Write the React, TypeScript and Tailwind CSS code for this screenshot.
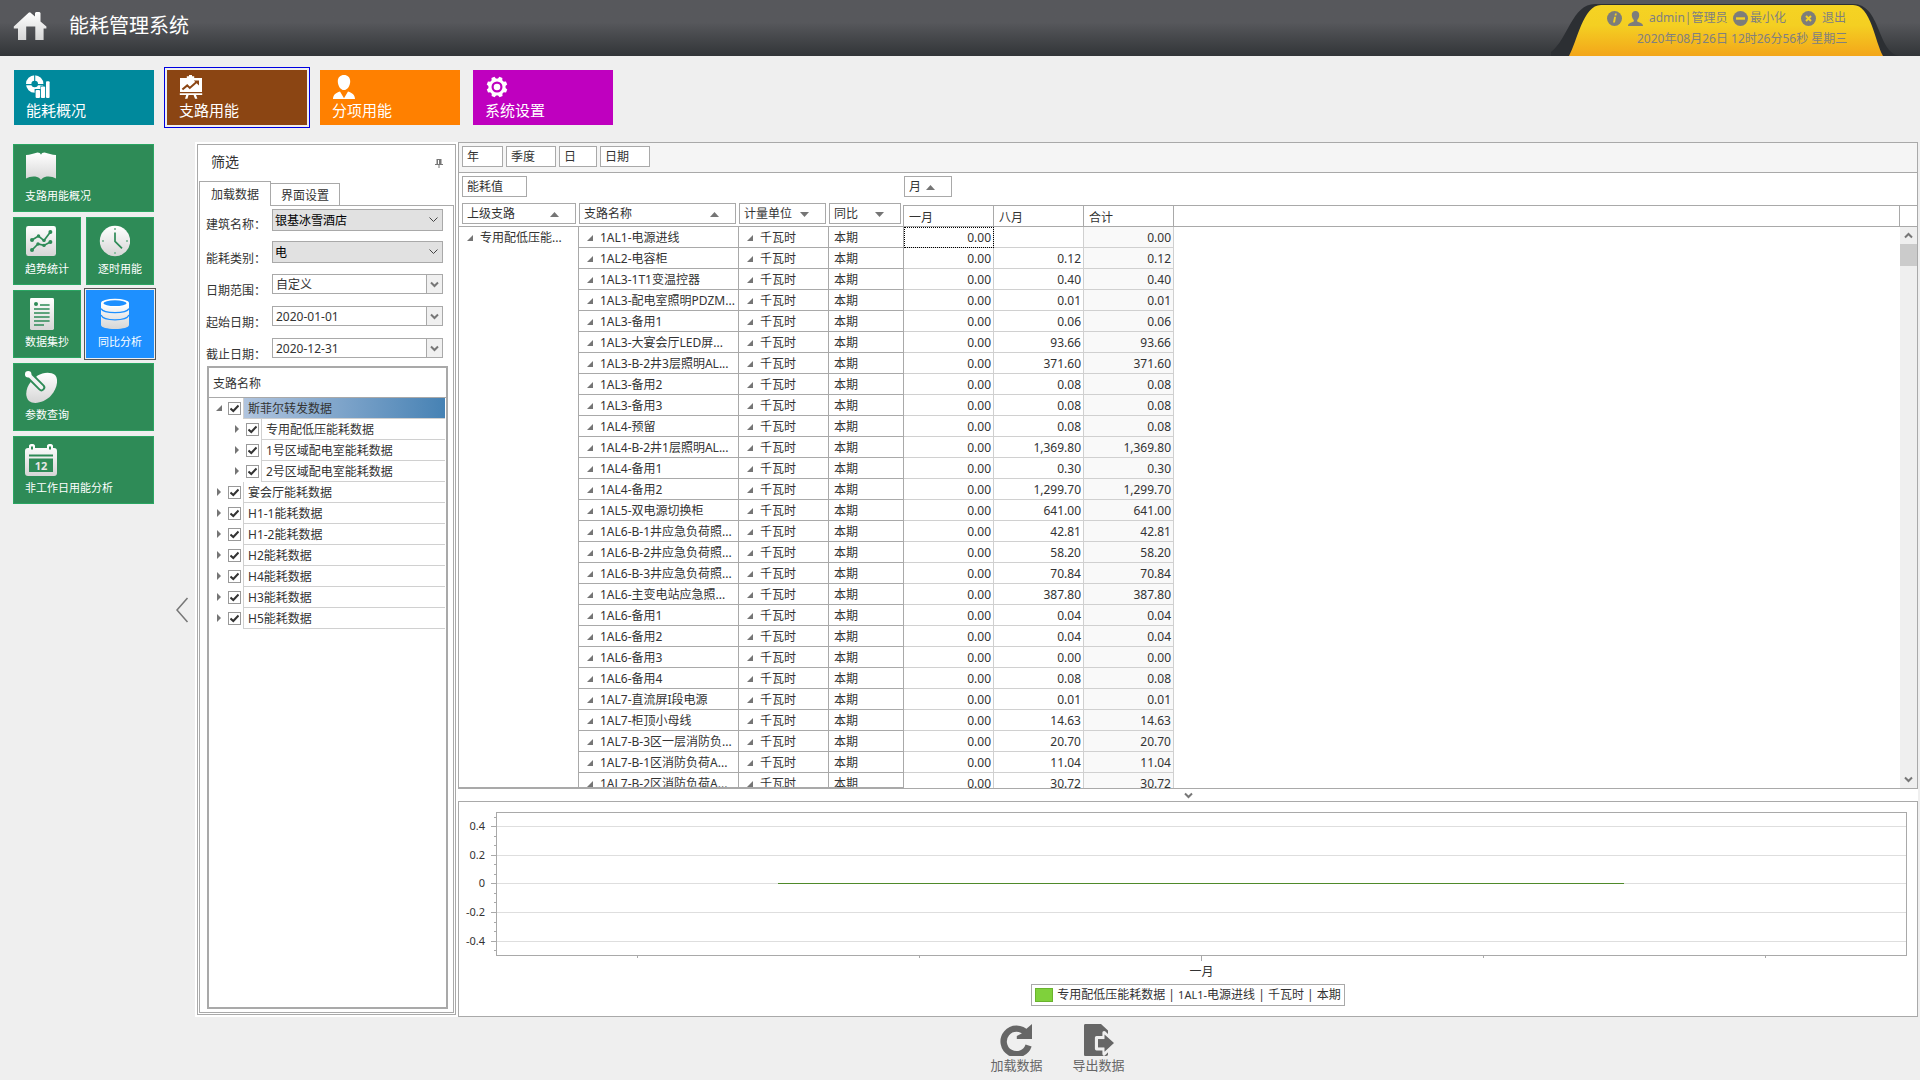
import React, { useState } from "react";

/* ---------- data ---------- */

type Row = { name: string; aug: string; total: string };

const rows: Row[] = [
  { name: "1AL1-电源进线", aug: "", total: "0.00" },
  { name: "1AL2-电容柜", aug: "0.12", total: "0.12" },
  { name: "1AL3-1T1变温控器", aug: "0.40", total: "0.40" },
  { name: "1AL3-配电室照明PDZM...", aug: "0.01", total: "0.01" },
  { name: "1AL3-备用1", aug: "0.06", total: "0.06" },
  { name: "1AL3-大宴会厅LED屏...", aug: "93.66", total: "93.66" },
  { name: "1AL3-B-2井3层照明AL...", aug: "371.60", total: "371.60" },
  { name: "1AL3-备用2", aug: "0.08", total: "0.08" },
  { name: "1AL3-备用3", aug: "0.08", total: "0.08" },
  { name: "1AL4-预留", aug: "0.08", total: "0.08" },
  { name: "1AL4-B-2井1层照明AL...", aug: "1,369.80", total: "1,369.80" },
  { name: "1AL4-备用1", aug: "0.30", total: "0.30" },
  { name: "1AL4-备用2", aug: "1,299.70", total: "1,299.70" },
  { name: "1AL5-双电源切换柜", aug: "641.00", total: "641.00" },
  { name: "1AL6-B-1井应急负荷照...", aug: "42.81", total: "42.81" },
  { name: "1AL6-B-2井应急负荷照...", aug: "58.20", total: "58.20" },
  { name: "1AL6-B-3井应急负荷照...", aug: "70.84", total: "70.84" },
  { name: "1AL6-主变电站应急照...", aug: "387.80", total: "387.80" },
  { name: "1AL6-备用1", aug: "0.04", total: "0.04" },
  { name: "1AL6-备用2", aug: "0.04", total: "0.04" },
  { name: "1AL6-备用3", aug: "0.00", total: "0.00" },
  { name: "1AL6-备用4", aug: "0.08", total: "0.08" },
  { name: "1AL7-直流屏I段电源", aug: "0.01", total: "0.01" },
  { name: "1AL7-柜顶小母线", aug: "14.63", total: "14.63" },
  { name: "1AL7-B-3区一层消防负...", aug: "20.70", total: "20.70" },
  { name: "1AL7-B-1区消防负荷A...", aug: "11.04", total: "11.04" },
  { name: "1AL7-B-2区消防负荷A...", aug: "30.72", total: "30.72" },
];

const tree = [
  { label: "斯菲尔转发数据", level: 0, open: true, selected: true },
  { label: "专用配低压能耗数据", level: 1 },
  { label: "1号区域配电室能耗数据", level: 1 },
  { label: "2号区域配电室能耗数据", level: 1 },
  { label: "宴会厅能耗数据", level: 0 },
  { label: "H1-1能耗数据", level: 0 },
  { label: "H1-2能耗数据", level: 0 },
  { label: "H2能耗数据", level: 0 },
  { label: "H4能耗数据", level: 0 },
  { label: "H3能耗数据", level: 0 },
  { label: "H5能耗数据", level: 0 },
];

/* ---------- icons ---------- */

const fade = "url(#fade)";

function Gradients() {
  return (
    <svg width="0" height="0" className="absolute" aria-hidden="true">
      <defs>
        <linearGradient id="fade" x1="0" y1="0" x2="0" y2="1">
          <stop offset="0" stopColor="#ffffff" />
          <stop offset="1" stopColor="#d6d6d6" />
        </linearGradient>
        <linearGradient id="gold" x1="0" y1="0" x2="0" y2="1">
          <stop offset="0" stopColor="#f5d323" />
          <stop offset="0.4" stopColor="#f4cf22" />
          <stop offset="1" stopColor="#f3a61a" />
        </linearGradient>
      </defs>
    </svg>
  );
}

function HomeIcon() {
  return (
    <svg width="34" height="30" viewBox="0 0 34 30">
      <path
        fill={fade}
        d="M17 1.2 L22 5.4 V2 L23 1 H26.5 L27.5 2 V10.5 L33.4 15.5 V17.5 H30.6 V29 H22.3 V15.5 H13.2 V29 H5 V17.5 H.8 V15.5 L15.6 1.7 Z"
      />
    </svg>
  );
}

function PieBarsIcon() {
  return (
    <svg width="24" height="24" viewBox="0 0 24 24">
      <circle cx="8.7" cy="9" r="6" fill="none" stroke="#fff" strokeWidth="5.4" />
      <path d="M8.7 0V6M0 9.6H6M11 9.6H18" stroke="#00899c" strokeWidth="1.1" />
      <path d="M8.6 14H14.4V10.4H19V5.5H25V24H8.6Z" fill="#00899c" />
      <rect x="9.6" y="15" width="4.4" height="8" rx="1" fill="#fff" />
      <rect x="14.9" y="11.4" width="4.2" height="11.6" rx="1" fill="#fff" />
      <rect x="20" y="6.2" width="3.6" height="16.8" rx="1" fill="#fff" />
    </svg>
  );
}

function BoardIcon() {
  return (
    <svg width="24" height="24" viewBox="0 0 24 24">
      <path d="M10 0H13V1.3H15.2V3H7.8V1.3H10Z" fill="#fff" />
      <path d="M1 3H23V17H1ZM0.8 18.2H23.2V20H0.8ZM7.2 20H9.6L8.4 23.8H6ZM14.6 20H17L18.4 23.8H16Z" fill="#fff" />
      <path d="M3.4 14.6L8.2 10.4L10.8 13L17.8 6.8" fill="none" stroke="#8b4513" strokeWidth="2" />
      <path d="M14.8 5.4H20V10.6Z" fill="#8b4513" />
    </svg>
  );
}

function PersonIcon() {
  return (
    <svg width="24" height="24" viewBox="0 0 24 24">
      <path
        fill="#fff"
        d="M12 0C15.6 0 18.2 2.4 18.2 6.4C18.2 10.6 15.4 15 12 15S5.8 10.6 5.8 6.4C5.8 2.4 8.4 0 12 0ZM8 16.4L12 23.2L16 16.4C20.4 17.8 23 20 23 24H1C1 20 3.6 17.8 8 16.4Z"
      />
    </svg>
  );
}

function GearIcon() {
  return (
    <svg width="24" height="24" viewBox="0 0 24 24">
      <g fill="#fff">
        {[0, 45, 90, 135].map((a) => (
          <path key={a} d="M9.6 4L10.4 1.6H13.6L14.4 4V20L13.6 22.4H10.4L9.6 20Z" transform={`rotate(${a + 22} 12 12)`} />
        ))}
        <circle cx="12" cy="12" r="8.6" />
      </g>
      <circle cx="12" cy="12" r="4.4" fill="none" stroke="#bf00bf" strokeWidth="2.2" />
    </svg>
  );
}

function MapIcon() {
  return (
    <svg width="32" height="32" viewBox="0 0 32 32">
      <path
        fill={fade}
        d="M1 3C5 3 9 1.6 12.5 .6C14.4 .6 15.4 1.4 16 2.8C16.6 1.4 17.6 .6 19.5 .6C23 1.6 27 3 31 3V26.6C28 25 24 23.800 20 25C18 25.600 16.800 26.800 16 28C15.200 26.800 14 25.600 12 25C8 23.800 4 25 1 26.600Z"
      />
    </svg>
  );
}

function TrendIcon() {
  return (
    <svg width="32" height="32" viewBox="0 0 32 32">
      <rect x="1" y="1" width="30" height="30" rx="2.4" fill={fade} />
      <g fill="none" stroke="#2e8b57" strokeWidth="1.7">
        <path d="M7 15L13.5 11L19 15.6L25.4 7M7 25L13 19L19 20.4L25.4 17" />
      </g>
      <g fill="#2e8b57">
        <circle cx="7" cy="15" r="2" />
        <circle cx="13.5" cy="11" r="1.7" />
        <circle cx="19" cy="15.4" r="1.7" />
        <circle cx="25.4" cy="7" r="2" />
        <circle cx="7" cy="25" r="2" />
        <circle cx="13" cy="19" r="1.7" />
        <circle cx="19" cy="20.4" r="1.7" />
        <circle cx="25.4" cy="17" r="2" />
      </g>
    </svg>
  );
}

function ClockIcon() {
  return (
    <svg width="32" height="32" viewBox="0 0 32 32">
      <circle cx="17" cy="16" r="15.2" fill={fade} />
      <path d="M17 7.4V16.4L24 23.4" fill="none" stroke="#2e8b57" strokeWidth="1.7" />
      <path d="M16 3H18V5H16ZM16 27H18V29H16ZM4 15H6V17H4ZM28 15H30V17H28Z" fill="#8fc0a4" />
    </svg>
  );
}

function SheetIcon() {
  return (
    <svg width="32" height="32" viewBox="0 0 32 32">
      <rect x="5" y="0" width="24" height="32" rx="1.4" fill={fade} />
      <circle cx="11" cy="6" r="2" fill="#2e8b57" />
      <path d="M15 7H24.6M9 11H24.6M9 15H24.6M9 19H24.6M9 23H24.6M9 27H19" stroke="#2e8b57" strokeWidth="1.7" />
    </svg>
  );
}

function DatabaseIcon() {
  return (
    <svg width="32" height="32" viewBox="0 0 32 32">
      <path d="M3 5V27C3 29.4 9 31 17 31S31 29.4 31 27V5Z" fill={fade} />
      <ellipse cx="17" cy="5" rx="14" ry="4.2" fill="#fff" />
      <ellipse cx="17" cy="5.2" rx="11.6" ry="2.9" fill="#1e90ff" />
      <g fill="none" stroke="#1e90ff" strokeWidth="1.3">
        <path d="M3 10.6C4.5 13.4 10 14.6 17 14.6S29.5 13.4 31 10.6M3 17C4.5 20.4 10 21.8 17 21.8S29.5 20.4 31 17" />
      </g>
    </svg>
  );
}

function DishIcon() {
  return (
    <svg width="32" height="32" viewBox="0 0 32 32">
      <path fill={fade} d="M12.6 4.6C18 1 26 .6 30 4C34 8.6 32 17.6 26 24.6C20 31.4 9 34 4 30C-.4 26 .6 17 6 10.6Z" />
      <path d="M3 3L16.4 16.4" stroke="#2e8b57" strokeWidth="7.6" strokeLinecap="round" />
      <path d="M4 4L16.4 16.4" stroke="#f2f2f2" strokeWidth="3.8" strokeLinecap="round" />
      <circle cx="3.2" cy="3.2" r="3.2" fill="#fff" />
    </svg>
  );
}

function CalendarIcon() {
  return (
    <svg width="32" height="32" viewBox="0 0 32 32">
      <path
        fill={fade}
        d="M3 4H4V2C4 -.6 10 -.6 10 2V4H22V2C22 -.6 28 -.6 28 2V4H29C31 4 32 5 32 7V29C32 31 31 32 29 32H3C1 32 0 31 0 29V7C0 5 1 4 3 4Z"
      />
      <path d="M6 2.5H8V5.5H6ZM24 2.5H26V5.5H24ZM4 10.500H28V12.500H4ZM4 14.500H28V28H4Z" fill="#2e8b57" />
      <text x="16" y="25.5" textAnchor="middle" fontSize="11" fontWeight="700" fill="#e6e6e6">
        12
      </text>
    </svg>
  );
}

function Tri({ dir }: { dir: "up" | "down" | "right" | "corner" }) {
  const d = {
    up: "M0 7L4.5 2L9 7Z",
    down: "M0 2H9L4.5 7Z",
    right: "M2 0L6 4L2 8Z",
    corner: "M7 1V7H1Z",
  }[dir];
  return (
    <svg width="9" height="9" viewBox="0 0 9 9" className="shrink-0">
      <path d={d} fill="#757575" />
    </svg>
  );
}

function Chevron({ up = false }: { up?: boolean }) {
  return (
    <svg width="9" height="7" viewBox="0 0 9 7" className="shrink-0">
      <path d={up ? "M1 5.5L4.5 2L8 5.5" : "M1 1.5L4.5 5L8 1.5"} fill="none" stroke="#777" strokeWidth="2" />
    </svg>
  );
}

/* ---------- header ---------- */

function Header() {
  return (
    <header className="flex h-14 shrink-0 items-start justify-between bg-linear-to-b from-[#57585c] from-40% to-[#323538]">
      <div className="flex items-center pt-2 pl-[13px]">
        <HomeIcon />
        <h1 className="ml-[22px] text-[20px] leading-9 text-white">能耗管理系统</h1>
      </div>
      <div className="relative mr-[21px] h-14 w-[348px]">
        <svg className="absolute inset-0" width="348" height="56" viewBox="0 0 348 56">
          <path d="M-8 56C16 50 18 4 44 4H302C330 4 326 52 348 56Z" fill="#2c2f33" />
          <path d="M18 56C26 42 32 5 50 5H302C320 5 324 42 332 56Z" fill="url(#gold)" />
        </svg>
        <div className="relative pt-[9px] text-[12px] text-[#808080]">
          <div className="flex h-[18px] items-center pl-[56px]">
            <button type="button" aria-label="关于">
              <svg width="15" height="15" viewBox="0 0 15 15">
                <circle cx="7.5" cy="7.5" r="7.5" fill="#7d7d7a" />
                <path d="M8 2.6H9.8L9.4 4.6H7.6ZM7.2 5.8H9L8 11.6H6Z" fill="#f4d022" />
              </svg>
            </button>
            <svg className="ml-[6px]" width="15" height="15" viewBox="0 0 15 15">
              <path
                fill="#7d7d7a"
                d="M7.5 0C10 0 11.4 1.6 11.2 4.4C11 6.6 10 8 9.2 9V10.6C11 11.6 15 12 15 15H0C0 12 4 11.6 5.8 10.6V9C5 8 4 6.6 3.8 4.4C3.6 1.6 5 0 7.5 0Z"
              />
            </svg>
            <span className="ml-[6px] w-[80px] whitespace-nowrap">admin|管理员</span>
            <button type="button" className="ml-[4px] flex items-center gap-[2px]">
              <svg width="15" height="15" viewBox="0 0 15 15">
                <circle cx="7.5" cy="7.5" r="7.5" fill="#7d7d7a" />
                <rect x="3" y="6.3" width="9" height="2.4" fill="#f4d022" />
              </svg>
              最小化
            </button>
            <button type="button" className="ml-[15px] flex items-center gap-[6px]">
              <svg width="15" height="15" viewBox="0 0 15 15">
                <circle cx="7.5" cy="7.5" r="7.5" fill="#7d7d7a" />
                <path d="M5 5L10 10M10 5L5 10" stroke="#f4d022" strokeWidth="2" />
              </svg>
              退出
            </button>
          </div>
          <div className="pl-[86px] leading-6 whitespace-nowrap">2020年08月26日 12时26分56秒 星期三</div>
        </div>
      </div>
    </header>
  );
}

/* ---------- navigation tiles ---------- */

const navBase =
  "flex h-[55px] w-[140px] flex-col items-start justify-start pt-[5px] pl-3 text-left text-[15px] leading-5 text-white";

function TopNav() {
  return (
    <nav className="flex h-[86px] shrink-0 gap-[13px] pt-[14px] pl-[14px]">
      <button type="button" className={`${navBase} bg-[#00899c]`}>
        <PieBarsIcon />
        <span className="mt-px">能耗概况</span>
      </button>
      <button type="button" className={`${navBase} bg-[#8b4513] outline outline-offset-2 outline-[#0000e0]`}>
        <BoardIcon />
        <span className="mt-px">支路用能</span>
      </button>
      <button type="button" className={`${navBase} bg-[#ff8000]`}>
        <PersonIcon />
        <span className="mt-px">分项用能</span>
      </button>
      <button type="button" className={`${navBase} bg-[#bf00bf]`}>
        <GearIcon />
        <span className="mt-px">系统设置</span>
      </button>
    </nav>
  );
}

function SideTile({
  label,
  wide = false,
  active = false,
  children,
}: {
  label: string;
  wide?: boolean;
  active?: boolean;
  children: React.ReactNode;
}) {
  return (
    <button
      type="button"
      className={`flex h-[68px] flex-col items-start justify-start border pt-[7px] pl-[11px] text-left text-[11px] leading-4 text-white ${
        wide ? "col-span-2" : ""
      } ${
        active
          ? "border-[#1e90ff] bg-[#1e90ff] outline outline-offset-1 outline-[#555]"
          : "border-[#2aa562] bg-[#2e8b57]"
      }`}
    >
      {children}
      <span className="mt-1 whitespace-nowrap">{label}</span>
    </button>
  );
}

function SideNav() {
  return (
    <aside className="flex w-[195px] shrink-0 pl-[13px]">
      <div className="mt-[2px] grid w-[141px] shrink-0 grid-cols-2 content-start gap-[5px]">
        <SideTile label="支路用能概况" wide>
          <MapIcon />
        </SideTile>
        <SideTile label="趋势统计">
          <TrendIcon />
        </SideTile>
        <SideTile label="逐时用能">
          <ClockIcon />
        </SideTile>
        <SideTile label="数据集抄">
          <SheetIcon />
        </SideTile>
        <SideTile label="同比分析" active>
          <DatabaseIcon />
        </SideTile>
        <SideTile label="参数查询" wide>
          <DishIcon />
        </SideTile>
        <SideTile label="非工作日用能分析" wide>
          <CalendarIcon />
        </SideTile>
      </div>
      <div className="flex flex-1 items-center pt-[60px] pl-[21px]">
        <button type="button" aria-label="收起">
          <svg width="14" height="26" viewBox="0 0 14 26">
            <path d="M12.5 1L2 13L12.5 25" fill="none" stroke="#777" strokeWidth="1.5" />
          </svg>
        </button>
      </div>
    </aside>
  );
}

/* ---------- filter panel ---------- */

function Field({ id, label, low, children }: { id: string; label: string; low?: boolean; children: React.ReactNode }) {
  return (
    <div className="flex h-[22px] items-start pr-[10px] pl-[6px]">
      <label htmlFor={id} className={`w-[66px] shrink-0 whitespace-nowrap ${low ? "leading-9" : "leading-8"}`}>
        {label}
      </label>
      <div className="min-w-0 flex-1">{children}</div>
    </div>
  );
}

function FlatSelect({ id, value }: { id: string; value: string }) {
  return (
    <div className="relative">
      <select
        id={id}
        className="block h-[22px] w-full appearance-none rounded-none border border-[#a9a9a9] bg-[#e1e1e1] pt-[2px] pl-[2px] text-black"
      >
        <option>{value}</option>
      </select>
      <svg className="pointer-events-none absolute top-[8px] right-[5px]" width="9" height="6" viewBox="0 0 9 6">
        <path d="M.5 .5L4.5 4.5L8.5 .5" fill="none" stroke="#444" />
      </svg>
    </div>
  );
}

function DateBox({ id, value }: { id: string; value: string }) {
  const [text, setText] = useState(value);
  return (
    <div className="mt-px flex h-5 border border-[#a9a9a9]">
      <input
        id={id}
        className="h-full min-w-0 flex-1 pl-[3px] outline-none"
        value={text}
        onChange={(e) => setText(e.target.value)}
      />
      <button
        type="button"
        aria-label="展开"
        className="flex w-4 items-center justify-center border-l border-[#a9a9a9] bg-[#f0f0f0]"
      >
        <Chevron />
      </button>
    </div>
  );
}

function TreeRow({ label, level, open, selected }: { label: string; level: number; open?: boolean; selected?: boolean }) {
  const [on, setOn] = useState(true);
  return (
    <li className={`flex h-[21px] items-stretch pr-px ${level ? "pl-[18px]" : ""}`}>
      <button type="button" aria-label="展开" className="flex w-[19px] shrink-0 items-center pl-[6px]">
        <Tri dir={open ? "corner" : "right"} />
      </button>
      <label className="flex min-w-0 flex-1">
        <span className="relative flex w-[15px] shrink-0 items-center">
          <input
            type="checkbox"
            checked={on}
            onChange={() => setOn(!on)}
            className="size-[13px] appearance-none border border-[#999] bg-white"
          />
          {on && (
            <svg className="pointer-events-none absolute left-[2px]" width="9" height="9" viewBox="0 0 9 9">
              <path d="M.5 4.5L3.3 7L8.5 1.5" fill="none" stroke="#333" strokeWidth="2" />
            </svg>
          )}
        </span>
        <span
          className={`min-w-0 flex-1 border-b border-l border-[#d0d0d0] pl-1 leading-[22px] whitespace-nowrap ${
            selected ? "bg-linear-to-r from-[#b0c4de] to-[#4682b4]" : ""
          }`}
        >
          {label}
        </span>
      </label>
    </li>
  );
}

function FilterPanel() {
  return (
    <section className="mt-[2px] mb-[2px] ml-[2px] flex w-[259px] shrink-0 flex-col border border-[#a9a9a9] p-px pt-0">
      <div className="flex h-9 shrink-0 items-center justify-between pr-[11px] pl-3">
        <h2 className="pb-1 text-[14px]">筛选</h2>
        <button type="button" aria-label="固定">
          <svg width="8" height="9" viewBox="0 0 8 9">
            <path d="M1.5 0H6.5V5H8V6H4.5V9H3.5V6H0V5H1.5Z" fill="#777" />
            <path d="M3 1H4V5H3Z" fill="#fff" />
          </svg>
        </button>
      </div>
      <div role="tablist" className="flex shrink-0 items-end">
        <button
          type="button"
          role="tab"
          aria-selected="true"
          className="relative -mb-px h-[25px] w-[72px] border border-b-0 border-[#a9a9a9] bg-white pt-[2px]"
        >
          加载数据
        </button>
        <button
          type="button"
          role="tab"
          aria-selected="false"
          className="h-[22px] w-[69px] border border-b-0 border-l-0 border-[#a9a9a9] bg-white pt-[2px]"
        >
          界面设置
        </button>
      </div>
      <div className="flex flex-1 flex-col border border-[#a9a9a9] pt-[3px]">
        <div className="flex shrink-0 flex-col gap-[10px]">
          <Field id="building" label="建筑名称：">
            <FlatSelect id="building" value="银基冰雪酒店" />
          </Field>
          <Field id="kind" label="能耗类别：" low>
            <FlatSelect id="kind" value="电" />
          </Field>
          <Field id="range" label="日期范围：" low>
            <DateBox id="range" value="自定义" />
          </Field>
          <Field id="from" label="起始日期：" low>
            <DateBox id="from" value="2020-01-01" />
          </Field>
          <Field id="to" label="截止日期：" low>
            <DateBox id="to" value="2020-12-31" />
          </Field>
        </div>
        <div className="mt-[7px] mr-[5px] mb-[3px] ml-[7px] flex-1 border-2 border-[#a9a9a9]">
          <div className="h-[30px] border-b border-[#a9a9a9] pl-1 leading-[31px]">支路名称</div>
          <ul>
            {tree.map((t) => (
              <TreeRow key={t.label} {...t} />
            ))}
          </ul>
        </div>
      </div>
    </section>
  );
}

/* ---------- pivot grid ---------- */

const chip = "flex h-[21px] items-center border border-[#a9a9a9] bg-white pt-px pl-[4px]";
const fieldCell = "h-[21px] border-r border-b border-[#a9a9a9] p-0";
const dataCell = "border-r border-b border-[#d0d0d0] p-0 pt-[2px] pr-[2px] text-right leading-[18px]";
const headCell = "h-[22px] border-t border-r border-b border-[#a9a9a9] pl-[5px] text-left leading-[23px]";

function FieldHead({ label, dir, first = false }: { label: string; dir: "up" | "down"; first?: boolean }) {
  return (
    <th
      scope="col"
      className={`border-b border-[#a9a9a9] p-0 pr-[3px] pb-[2px] align-top font-normal ${first ? "pl-[3px]" : ""}`}
    >
      <button type="button" className={`${chip} w-full justify-between pr-4`}>
        {label}
        <Tri dir={dir} />
      </button>
    </th>
  );
}

function ExpandText({ children }: { children: React.ReactNode }) {
  return (
    <div className="flex h-5 items-center overflow-hidden pt-[2px] pl-[7px] whitespace-nowrap">
      <Tri dir="corner" />
      <span className="ml-[5px] leading-[18px]">{children}</span>
    </div>
  );
}

function PivotGrid() {
  return (
    <section className="flex min-h-0 flex-1 flex-col border border-[#a9a9a9] bg-white">
      <div className="flex h-[30px] shrink-0 gap-[3px] border-b border-[#a9a9a9] bg-[#f5f5f5] pt-[3px] pl-[3px]">
        <button type="button" className={`${chip} w-[41px]`}>年</button>
        <button type="button" className={`${chip} w-[50px]`}>季度</button>
        <button type="button" className={`${chip} w-[38px]`}>日</button>
        <button type="button" className={`${chip} w-[50px]`}>日期</button>
      </div>
      <div className="flex min-h-0 flex-1">
        <div className="relative min-w-0 flex-1 overflow-hidden">
          <table className="w-full table-fixed border-separate border-spacing-0">
            <colgroup>
              <col className="w-[120px]" />
              <col className="w-[160px]" />
              <col className="w-[90px]" />
              <col className="w-[75px]" />
              <col className="w-[90px]" />
              <col className="w-[90px]" />
              <col className="w-[90px]" />
              <col />
            </colgroup>
            <thead>
              <tr>
                <th colSpan={4} className="h-[30px] p-0 pt-[3px] pl-[3px] align-top font-normal">
                  <button type="button" className={`${chip} w-[65px]`}>能耗值</button>
                </th>
                <th colSpan={4} className="p-0 pt-[3px] align-top font-normal">
                  <button type="button" className={`${chip} w-[48px] gap-[5px]`}>
                    月
                    <Tri dir="up" />
                  </button>
                </th>
              </tr>
              <tr className="h-6">
                <FieldHead label="上级支路" dir="up" first />
                <FieldHead label="支路名称" dir="up" />
                <FieldHead label="计量单位" dir="down" />
                <FieldHead label="同比" dir="down" />
                <th scope="col" className="p-0 align-bottom font-normal">
                  <div className={`${headCell} -ml-px border-l`}>一月</div>
                </th>
                <th scope="col" className="p-0 align-bottom font-normal">
                  <div className={headCell}>八月</div>
                </th>
                <th scope="col" className="p-0 align-bottom font-normal">
                  <div className={headCell}>合计</div>
                </th>
                <td className="p-0 align-bottom">
                  <div className="h-[22px] border-t border-b border-[#a9a9a9]" />
                </td>
              </tr>
            </thead>
            <tbody>
              {rows.map((r, i) => (
                <tr key={r.name}>
                  {i === 0 && (
                    <td rowSpan={rows.length} className="border-r border-[#a9a9a9] p-0 align-top">
                      <ExpandText>专用配低压能...</ExpandText>
                    </td>
                  )}
                  <td className={fieldCell}>
                    <ExpandText>{r.name}</ExpandText>
                  </td>
                  <td className={fieldCell}>
                    <ExpandText>千瓦时</ExpandText>
                  </td>
                  <td className={fieldCell}>
                    <div className="h-5 pt-[2px] pl-[5px] leading-[18px]">本期</div>
                  </td>
                  <td
                    className={`${dataCell} ${i === 0 ? "outline outline-offset-[-1px] outline-dotted outline-black" : ""}`}
                  >
                    0.00
                  </td>
                  <td className={dataCell}>{r.aug}</td>
                  <td className={`${dataCell} bg-[#f9f9f9]`}>{r.total}</td>
                </tr>
              ))}
            </tbody>
          </table>
          <div className="absolute bottom-0 left-0 h-px w-[445px] bg-[#a9a9a9]" />
        </div>
        <div className="flex w-[18px] shrink-0 flex-col">
          <div className="mt-8 h-[22px] shrink-0 border border-r-0 border-[#a9a9a9]" />
          <div className="ml-px flex flex-1 flex-col items-center bg-[#efefef]">
            <button type="button" aria-label="向上滚动" className="flex h-[17px] w-full items-center justify-center">
              <Chevron up />
            </button>
            <div className="h-[22px] w-full bg-[#cbcbcb]" />
            <button type="button" aria-label="向下滚动" className="mt-auto flex h-[17px] w-full items-center justify-center">
              <Chevron />
            </button>
          </div>
        </div>
      </div>
    </section>
  );
}

/* ---------- chart ---------- */

const yTicks = [
  { label: "0.4", y: 14 },
  { label: "0.2", y: 43 },
  { label: "0", y: 71 },
  { label: "-0.2", y: 100 },
  { label: "-0.4", y: 129 },
];
const yMinor = [5, 24, 33, 52, 62, 81, 90, 110, 119, 138];
const xTicks = ["10%", "30%", "70%", "90%"];

function Chart() {
  return (
    <section className="flex h-[216px] shrink-0 flex-col border border-[#a9a9a9] bg-white pt-[10px]">
      <div className="flex h-[144px] shrink-0 pr-[11px]">
        <svg className="h-full w-[37px] shrink-0 overflow-visible" fontSize="11" fill="#333" shapeRendering="crispEdges">
          {yTicks.map((t) => (
            <text key={t.label} x="26" y={t.y + 4} textAnchor="end">
              {t.label}
            </text>
          ))}
          <g stroke="#a9a9a9">
            {yTicks.map((t) => (
              <line key={t.y} x1="32" x2="37" y1={t.y + 0.5} y2={t.y + 0.5} />
            ))}
            {yMinor.map((y) => (
              <line key={y} x1="35" x2="37" y1={y + 0.5} y2={y + 0.5} />
            ))}
          </g>
        </svg>
        <svg className="h-full min-w-0 flex-1 overflow-visible" shapeRendering="crispEdges">
          {yTicks.map((t) => (
            <line key={t.y} x1="0" x2="100%" y1={t.y + 0.5} y2={t.y + 0.5} stroke="#dedede" />
          ))}
          <rect x="0" y="0" width="100%" height="143" fill="none" stroke="#a9a9a9" />
          {xTicks.map((x) => (
            <line key={x} x1={x} x2={x} y1="143" y2="146" stroke="#a9a9a9" />
          ))}
          <line x1="50%" x2="50%" y1="143" y2="149" stroke="#a9a9a9" />
          <line x1="20%" x2="80%" y1="71.5" y2="71.5" stroke="#4f8a2a" />
        </svg>
      </div>
      <div className="mr-[10px] ml-[37px] pt-2 text-center leading-4">一月</div>
      <div className="mt-1 flex justify-center">
        <div className="flex h-[22px] items-center gap-1 border border-[#a9a9a9] pr-[3px] pl-[3px] whitespace-nowrap">
          <span className="h-[14px] w-[18px] border border-[#69b32d] bg-[#7fd13b]" />
          <span>
            专用配低压能耗数据 | <span className="text-[11px]">1AL1-</span>电源进线 | 千瓦时 | 本期
          </span>
        </div>
      </div>
    </section>
  );
}

/* ---------- footer ---------- */

function Footer() {
  return (
    <footer className="mr-px ml-[196px] flex h-[63px] shrink-0 justify-center gap-[30px] pt-[7px] text-[13px] leading-4 text-[#666]">
      <button type="button" className="flex flex-col items-center justify-start">
        <svg width="32" height="32" viewBox="0 0 32 32">
          <path d="M26.4 9.4A12.8 12.8 0 1 0 28.6 21.5" fill="none" stroke="#666" strokeWidth="6.4" />
          <path d="M32 0V15H16.8V12L21.6 9.6L27 4.2Z" fill="#666" />
        </svg>
        <span className="mt-px">加载数据</span>
      </button>
      <button type="button" className="flex flex-col items-center justify-start">
        <svg width="32" height="32" viewBox="0 0 32 32">
          <path d="M2.5 0H18L25 6.5V30C25 31 24.5 32 23 32H2.5C1.5 32 1 31.5 1 30.5V1.5C1 .5 1.5 0 2.5 0Z" fill="#666" />
          <path
            d="M21 8.5L32 19L21 30V24.8H13.5V13.6H21Z"
            fill="#666"
            stroke="#efefef"
            strokeWidth="3.2"
            strokeLinejoin="round"
          />
          <path d="M21.5 10.5L31 19L21.5 27.8V23.2H15V15.2H21.5Z" fill="#666" />
        </svg>
        <span className="mt-px">导出数据</span>
      </button>
    </footer>
  );
}

export default function App() {
  return (
    <div className="flex h-screen flex-col overflow-hidden bg-[#efefef] font-['Noto_Sans','Noto_Sans_CJK_SC',sans-serif] text-[12px] text-[#333]">
      <Gradients />
      <Header />
      <TopNav />
      <div className="flex min-h-0 flex-1">
        <SideNav />
        <main className="mr-[2px] flex min-w-0 flex-1 bg-white">
          <FilterPanel />
          <div className="ml-[2px] flex min-w-0 flex-1 flex-col">
            <PivotGrid />
            <button type="button" aria-label="收起图表" className="flex h-3 shrink-0 items-center justify-center">
              <Chevron />
            </button>
            <Chart />
          </div>
        </main>
      </div>
      <Footer />
    </div>
  );
}
